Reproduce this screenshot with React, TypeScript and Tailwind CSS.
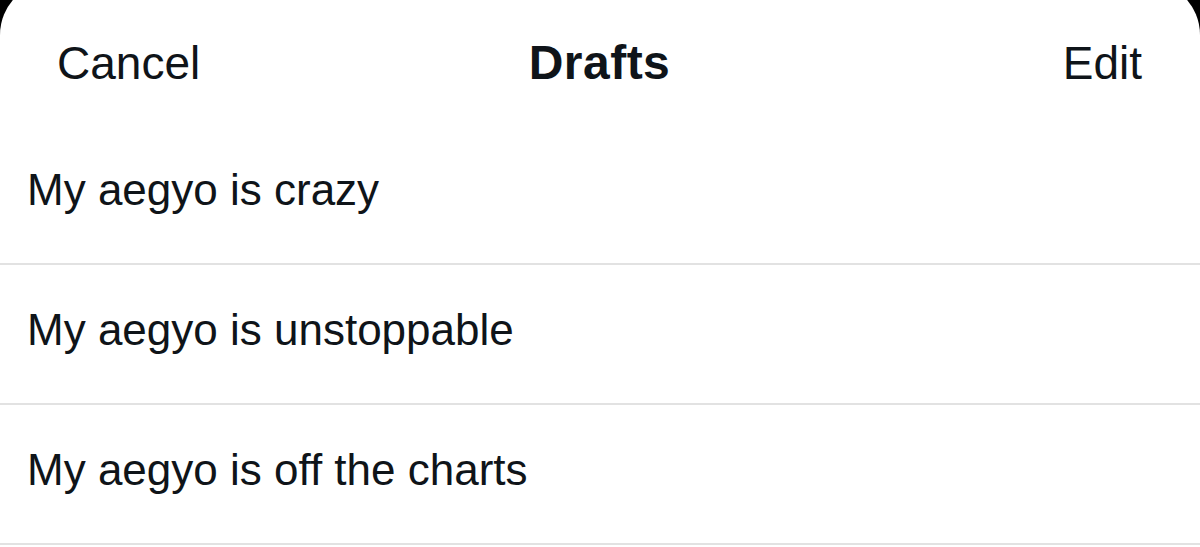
const drafts = ['My aegyo is crazy', 'My aegyo is unstoppable', 'My aegyo is off the charts'];

export default function App() {
  return (
    <div className="h-[547px] w-[1200px] overflow-hidden bg-black font-['Liberation_Sans',Arial,sans-serif] text-[#0f1419]">
      <div className="-mt-[19px] h-[566px] rounded-t-[54px] bg-white">
        {/* header */}
        <div className="flex h-[144px] items-center justify-between pt-[19px] pl-[57px] pr-[58px]">
          <span className="w-[200px] text-[46px] leading-none">Cancel</span>
          <span className="text-[48px] font-bold leading-none tracking-[0.01em]">Drafts</span>
          <span className="w-[200px] text-right text-[46px] leading-none">Edit</span>
        </div>

        {/* draft list */}
        {drafts.map((text, i) => (
          <div
            key={i}
            className="flex h-[140px] items-center border-b-2 border-[#e2e2e2] pb-2 pl-[27px]"
          >
            <span className="text-[44px] leading-none">{text}</span>
          </div>
        ))}
      </div>
    </div>
  );
}
